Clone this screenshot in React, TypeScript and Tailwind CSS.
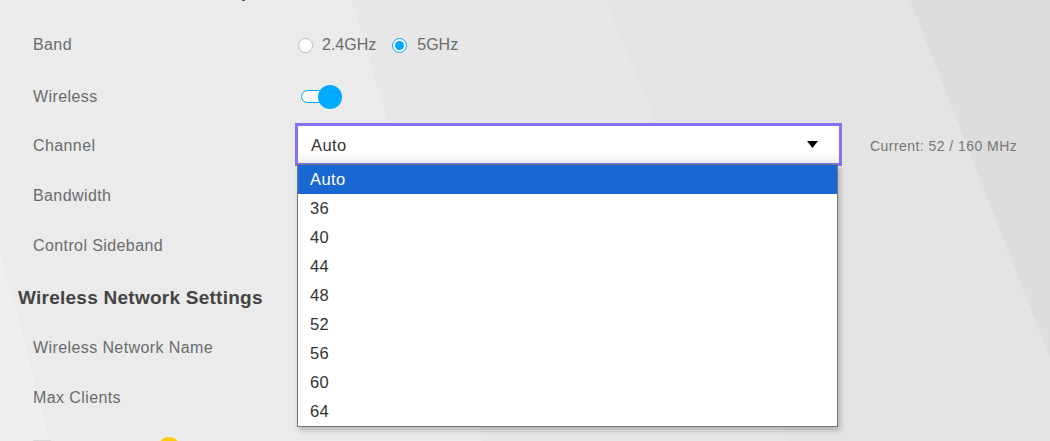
import React from "react";

const items = ["Auto", "36", "40", "44", "48", "52", "56", "60", "64"];

function Label({ children }: { children: React.ReactNode }) {
  return (
    <div className="w-[265px] shrink-0 pl-[33px] text-[16px] tracking-[0.4px] text-[#6b6b6b]">{children}</div>
  );
}

export default function App() {
  return (
    <div
      className="relative h-[441px] w-[1050px] overflow-hidden bg-[#ebebeb]"
      style={{ fontFamily: '"Liberation Sans", Arial, sans-serif' }}
    >
      {/* background diagonal bands */}
      <div className="pointer-events-none absolute inset-0 bg-[#efefef] [clip-path:polygon(0_250px,50px_441px,0_441px)]" />
      <div className="pointer-events-none absolute inset-0 bg-[#e7e7e7] [clip-path:polygon(352px_0,1050px_0,1050px_441px,482px_441px)]" />
      <div className="pointer-events-none absolute inset-0 bg-[#e4e4e4] [clip-path:polygon(606px_0,1050px_0,1050px_441px,786px_441px)]" />
      <div className="pointer-events-none absolute inset-0 bg-[#dddddd] [clip-path:polygon(910px_0,1050px_0,1050px_358px)]" />

      <div className="relative flex flex-col">
        <div className="mt-[-21px] h-[40px] pl-[35px] text-[19px] font-bold leading-[24px] tracking-[0.25px] text-[#444]">
          Wireless General Setup
        </div>

        {/* Band */}
        <div className="flex h-[52px] items-center">
          <Label>Band</Label>
          <div className="flex items-center text-[16px] text-[#6b6b6b]">
            <span className="ml-[33px] box-border h-[15px] w-[15px] rounded-full border border-[#bdbdbd] bg-white" />
            <span className="ml-[9px]">2.4GHz</span>
            <span className="ml-[16px] flex h-[15px] w-[15px] items-center justify-center rounded-full border-[1.5px] border-[#00aaff] bg-white">
              <span className="h-[9px] w-[9px] rounded-full bg-[#00aaff]" />
            </span>
            <span className="ml-[10px]">5GHz</span>
          </div>
        </div>

        {/* Wireless */}
        <div className="flex h-[51px] items-center">
          <Label>Wireless</Label>
          <div className="relative ml-[36px] h-[24px] w-[41px]">
            <div className="absolute left-0 top-[5px] h-[13px] w-[30px] rounded-full border border-[#00aaff] bg-white" />
            <div className="absolute right-0 top-0 h-[24px] w-[24px] rounded-full bg-[#00aaff]" />
          </div>
        </div>

        {/* Channel */}
        <div className="flex h-[48px] items-center">
          <Label>Channel</Label>
          <div className="relative ml-[30px] mt-[1px] self-start">
            <div className="flex h-[43px] w-[547px] border-[3px] border-[#8273f7] bg-[linear-gradient(to_bottom,#ffffff_70%,#f0f0f0)]">
              <div className="flex flex-1 items-center pl-[13px] pt-[1px] text-[16.5px] tracking-[0.4px] text-[#333]">Auto</div>
              <div className="flex items-center pr-[21px]">
                <svg width="11" height="7" viewBox="0 0 11 7">
                  <path d="M0 0 L11 0 L5.5 7 Z" fill="#000" />
                </svg>
              </div>
            </div>
            {/* dropdown list */}
            <div className="absolute left-[2px] top-[41px] z-10 w-[541px] border border-[#767676] bg-white shadow-[2px_3px_6px_rgba(0,0,0,0.25)]">
              {items.map((it, i) => (
                <div
                  key={it}
                  className={
                    "flex h-[29px] items-center pl-[12px] text-[16.5px] tracking-[0.4px] " +
                    (i === 0 ? "bg-[#1967d2] text-white" : "text-[#333]")
                  }
                >
                  {it}
                </div>
              ))}
            </div>
          </div>
          <div className="ml-[28px] text-[14px] tracking-[0.45px] text-[#777]">Current: 52 / 160 MHz</div>
        </div>

        {/* Bandwidth */}
        <div className="flex h-[52px] items-center">
          <Label>Bandwidth</Label>
        </div>

        {/* Control Sideband */}
        <div className="flex h-[48px] items-center">
          <Label>Control Sideband</Label>
        </div>

        {/* Heading */}
        <div className="flex h-[56px] items-center pl-[18px] text-[19px] font-bold tracking-[0.25px] text-[#444]">
          Wireless Network Settings
        </div>

        <div className="flex h-[44px] items-center">
          <Label>Wireless Network Name</Label>
        </div>
        <div className="flex h-[56px] items-center">
          <Label>Max Clients</Label>
        </div>

        <div className="flex h-[30px] items-start">
          <div className="ml-[33px] mt-[14px] h-[16px] w-[18px] bg-[#dadada]" />
          <div className="ml-[107px] mt-[11px] h-[22px] w-[22px] rounded-full bg-[#ffcc00]" />
        </div>
      </div>
    </div>
  );
}
